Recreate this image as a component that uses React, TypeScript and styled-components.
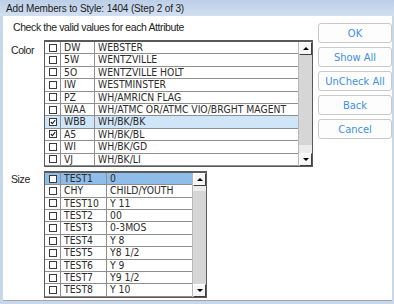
import { FC } from "react"
import styled, { createGlobalStyle } from "styled-components"

const GlobalStyle = createGlobalStyle`
  html, body {
    margin: 0;
    padding: 0;
    background: #fff;
  }
`

const NARROW = `"DejaVu Sans Condensed", "Liberation Sans", sans-serif`
const LABEL = `"Liberation Sans", Arial, sans-serif`

const Window = styled.div`
  width: 394px;
  height: 304px;
  box-sizing: border-box;
  display: flex;
  flex-direction: column;
  background: #c8d8ec;
  overflow: hidden;
  font-family: ${NARROW};
`

const TitleBar = styled.div`
  flex: none;
  height: 16px;
  padding-left: 6px;
  display: flex;
  align-items: center;
  background: linear-gradient(#bccfe7, #d2dff0);
  font-family: ${LABEL};
  font-size: 10px;
  letter-spacing: -0.15px;
  color: #1b1b1b;
`

const Client = styled.div`
  flex: 1;
  display: flex;
  margin: 0 2px 3px 3px;
  padding: 4px 0 0 8px;
  background: #fff;
  border-bottom: 1px solid #a5a5a5;
`

const Main = styled.div`
  display: flex;
  flex-direction: column;
`

const Instruction = styled.div`
  font-family: ${LABEL};
  font-size: 10.5px;
  letter-spacing: -0.4px;
  line-height: 14px;
  color: #222;
  margin: 0 0 6px 2px;
`

const Section = styled.div<{ $gap?: number }>`
  display: flex;
  margin-top: ${(p) => p.$gap ?? 0}px;
`

const SectionLabel = styled.div<{ $top: number }>`
  width: 33px;
  padding-top: ${(p) => p.$top}px;
  font-family: ${LABEL};
  font-size: 10.5px;
  letter-spacing: -0.4px;
  color: #222;
`

const GridFrame = styled.div`
  display: flex;
  border: 1px solid #5a5a5a;
  border-top-width: 2px;
  background: #fff;
`

const Rows = styled.div`
  display: flex;
  flex-direction: column;
`

const Row = styled.div<{ $cols: string; $selected?: "soft" | "strong" }>`
  display: grid;
  grid-template-columns: ${(p) => p.$cols};
  height: 12.4px;
  background: ${(p) =>
    p.$selected === "strong" ? "#8fbde9" : p.$selected === "soft" ? "#cfe5f8" : "transparent"};
`

const Cell = styled.div`
  box-sizing: border-box;
  border-right: 1px solid #8e8e8e;
  border-bottom: 1px solid #8e8e8e;
  padding-left: 3px;
  font-size: 10.3px;
  line-height: 11.4px;
  color: #2b2b2b;
  white-space: nowrap;
  overflow: hidden;
  &:last-child {
    border-right: none;
  }
`

const CheckCell = styled(Cell)`
  padding-left: 0;
  display: flex;
  align-items: center;
  justify-content: center;
`

const Box = styled.span`
  position: relative;
  width: 6px;
  height: 6px;
  border: 1px solid #3a3a3a;
  background: #fff;
`

const Scrollbar = styled.div`
  width: 13px;
  display: flex;
  flex-direction: column;
  background: #ececec;
  border-left: 1px solid #b8b8b8;
`

const ArrowButton = styled.div<{ $down?: boolean }>`
  flex: none;
  box-sizing: border-box;
  height: 13px;
  display: flex;
  align-items: center;
  justify-content: center;
  background: #f6f6f6;
  border: 1px solid;
  border-color: #ffffff #404040 #404040 #ffffff;
  &::after {
    content: "";
    border-left: 3px solid transparent;
    border-right: 3px solid transparent;
    ${(p) => (p.$down ? "border-top: 3px solid #000;" : "border-bottom: 3px solid #000;")}
  }
`

const Track = styled.div<{ $grow: number }>`
  flex: ${(p) => p.$grow};
`

const Thumb = styled.div<{ $grow: number }>`
  flex: ${(p) => p.$grow};
  background: #d6d6d6;
`

const ButtonColumn = styled.div`
  display: flex;
  flex-direction: column;
  gap: 4px;
  margin: 3px 0 0 5px;
`

const DialogButton = styled.button`
  width: 74px;
  height: 20px;
  padding: 0;
  border: 1px solid #c9c9c9;
  border-radius: 3px;
  background: #fdfdfd;
  color: #4090e6;
  font-family: ${NARROW};
  font-size: 11px;
`

type Item = { code: string; desc: string; checked?: boolean; selected?: "soft" | "strong" }

const colorItems: Item[] = [
  { code: "DW", desc: "WEBSTER" },
  { code: "5W", desc: "WENTZVILLE" },
  { code: "5O", desc: "WENTZVILLE HOLT" },
  { code: "IW", desc: "WESTMINSTER" },
  { code: "PZ", desc: "WH/AMRICN FLAG" },
  { code: "WAA", desc: "WH/ATMC OR/ATMC VIO/BRGHT MAGENT" },
  { code: "WBB", desc: "WH/BK/BK", checked: true, selected: "soft" },
  { code: "A5", desc: "WH/BK/BL", checked: true },
  { code: "WI", desc: "WH/BK/GD" },
  { code: "VJ", desc: "WH/BK/LI" },
]

const sizeItems: Item[] = [
  { code: "TEST1", desc: "0", selected: "strong" },
  { code: "CHY", desc: "CHILD/YOUTH" },
  { code: "TEST10", desc: "Y 11" },
  { code: "TEST2", desc: "00" },
  { code: "TEST3", desc: "0-3MOS" },
  { code: "TEST4", desc: "Y 8" },
  { code: "TEST5", desc: "Y8 1/2" },
  { code: "TEST6", desc: "Y 9" },
  { code: "TEST7", desc: "Y9 1/2" },
  { code: "TEST8", desc: "Y 10" },
]

const Check: FC<{ checked?: boolean }> = ({ checked }) => (
  <Box>
    {checked && (
      <svg width="6" height="6" viewBox="0 0 6 6" style={{ position: "absolute", left: 0, top: 0 }}>
        <path d="M0.8 3 L2.4 4.6 L5.2 1.2" stroke="#222" strokeWidth="1.1" fill="none" />
      </svg>
    )}
  </Box>
)

const AttributeGrid: FC<{
  items: Item[]
  cols: string
  thumb: [number, number, number]
}> = ({ items, cols, thumb }) => (
  <GridFrame>
    <Rows>
      {items.map((it) => (
        <Row key={it.code} $cols={cols} $selected={it.selected}>
          <CheckCell>
            <Check checked={it.checked} />
          </CheckCell>
          <Cell>{it.code}</Cell>
          <Cell>{it.desc}</Cell>
        </Row>
      ))}
    </Rows>
    <Scrollbar>
      <ArrowButton />
      <Track $grow={thumb[0]} />
      <Thumb $grow={thumb[1]} />
      <Track $grow={thumb[2]} />
      <ArrowButton $down />
    </Scrollbar>
  </GridFrame>
)

export default function App() {
  return (
    <>
      <GlobalStyle />
      <Window>
        <TitleBar>Add Members to Style: 1404 (Step 2 of 3)</TitleBar>
        <Client>
          <Main>
            <Instruction>Check the valid values for each Attribute</Instruction>
            <Section>
              <SectionLabel $top={4}>Color</SectionLabel>
              <AttributeGrid items={colorItems} cols="16px 34px 203px" thumb={[0, 94, 8]} />
            </Section>
            <Section $gap={4}>
              <SectionLabel $top={2}>Size</SectionLabel>
              <AttributeGrid items={sizeItems} cols="16px 46px 85px" thumb={[5, 92, 0]} />
            </Section>
          </Main>
          <ButtonColumn>
            <DialogButton>OK</DialogButton>
            <DialogButton>Show All</DialogButton>
            <DialogButton>UnCheck All</DialogButton>
            <DialogButton>Back</DialogButton>
            <DialogButton>Cancel</DialogButton>
          </ButtonColumn>
        </Client>
      </Window>
    </>
  )
}
